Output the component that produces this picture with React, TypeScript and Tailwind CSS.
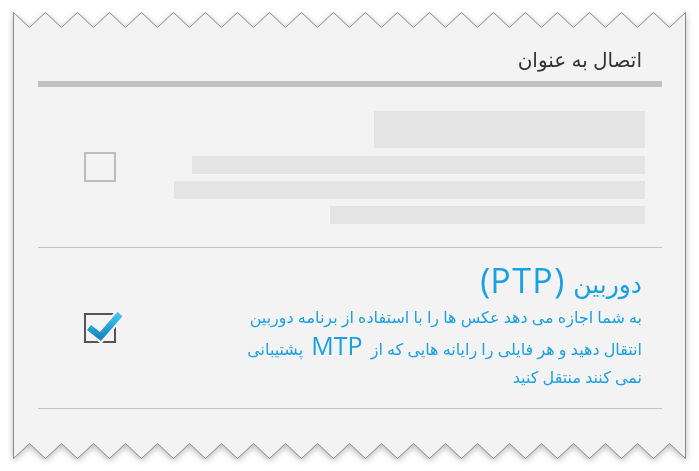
import React from 'react';

const PERIOD = 32;
const TEETH = 21;

// zigzag paper edge, drawn as svg strips above and below the body
function PaperEdge({ side }: { side: 'top' | 'bottom' }) {
  const pts: string[] = [];
  for (let i = 0; i <= TEETH * 2; i++) {
    const x = 0.5 + i * (PERIOD / 2);
    const up = i % 2 === 0;
    const y = side === 'top' ? (up ? 0.5 : 15.5) : up ? 15.5 : 0.5;
    pts.push(`${x},${y}`);
  }
  const line = pts.join(' ');
  const fill =
    side === 'top'
      ? `0,16 ${line} 673,16`
      : `0,0 ${line} 673,0`;
  const stroke =
    side === 'top' ? `0.5,16 ${line} 672.5,16` : `0.5,0 ${line} 672.5,0`;
  return (
    <svg width="673" height="16" className="block">
      <polygon points={fill} fill="#f3f3f3" />
      <polyline points={stroke} fill="none" stroke="#8a8a8a" strokeWidth="1" />
    </svg>
  );
}

function EmptyBox() {
  return <div className="w-[32px] h-[30px] border-2 border-[#bdbdbd]" />;
}

function CheckedBox() {
  return (
    <svg width="32" height="30" className="block overflow-visible">
      <defs>
        <linearGradient id="chk" x1="0" y1="0" x2="0" y2="1">
          <stop offset="0" stopColor="#45c4ef" />
          <stop offset="1" stopColor="#1688c6" />
        </linearGradient>
      </defs>
      <rect x="1" y="1" width="30" height="28" fill="none" stroke="#555555" strokeWidth="2" />
      <polyline points="5,14.5 16.5,23.5 36,1" fill="none" stroke="#f3f3f3" strokeWidth="11" strokeLinejoin="miter" />
      <polyline points="5,14.5 16.5,23.5 36,1" fill="none" stroke="url(#chk)" strokeWidth="6.5" strokeLinejoin="miter" />
    </svg>
  );
}

export default function App() {
  return (
    <div className="min-h-screen bg-white pt-[12px] pl-[13px] font-['Open_Sans','DejaVu_Sans',sans-serif]">
      <div className="w-[673px] drop-shadow-[0_2px_3px_rgba(0,0,0,0.28)]">
        <PaperEdge side="top" />
        <div className="bg-[#f3f3f3] border-x border-[#8a8a8a] pl-[24px] pr-[23px]">
          <div dir="rtl" className="pt-[18px] pr-[20px] text-[20px] leading-[28px] text-[#333333]">
            اتصال به عنوان
          </div>
          <div className="mt-[7px] h-[6px] bg-[#c2c2c2]" />

          <div className="h-[160px] flex items-center">
            <div className="pl-[46px]">
              <EmptyBox />
            </div>
            <div className="flex-1 flex flex-col items-end pr-[17px]">
              <div className="w-[271px] h-[37px] bg-[#e4e4e4]" />
              <div className="mt-[8px] w-[453px] h-[18px] bg-[#e4e4e4]" />
              <div className="mt-[7px] w-[471px] h-[18px] bg-[#e4e4e4]" />
              <div className="mt-[7px] w-[315px] h-[18px] bg-[#e4e4e4]" />
            </div>
          </div>
          <div className="h-px bg-[#c4c4c4]" />

          <div className="h-[160px] flex items-center">
            <div className="pl-[46px]">
              <CheckedBox />
            </div>
            <div dir="rtl" className="flex-1 pr-[20px] pb-[6px] text-[#1ba1e2]">
              <div className="text-[34px] leading-[40px]">
                <span className="text-[25px]">دوربین</span> <span className="tracking-[1.5px]">(PTP)</span>
              </div>
              <div className="text-[16px] leading-[28px]">
                <div>به شما اجازه می دهد عکس ها را با استفاده از برنامه دوربین</div>
                <div>
                  انتقال دهید و هر فایلی را رایانه هایی که از <span className="text-[25px] mx-[4px]">MTP</span> پشتیبانی
                </div>
                <div>نمی کنند منتقل کنید</div>
              </div>
            </div>
          </div>
          <div className="h-px bg-[#c4c4c4]" />
          <div className="h-[34px]" />
        </div>
        <PaperEdge side="bottom" />
      </div>
    </div>
  );
}
